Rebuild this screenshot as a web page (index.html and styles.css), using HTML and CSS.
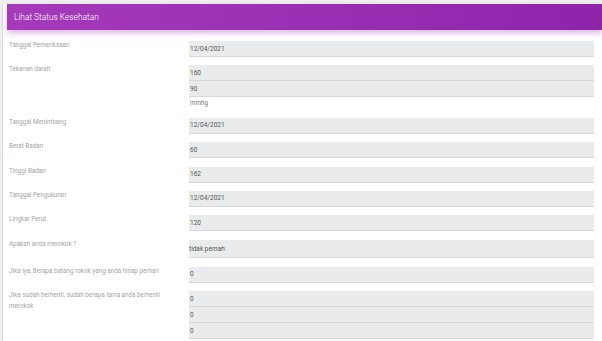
FILE: index.html
```html
<!DOCTYPE html>
<html lang="id">
<head>
  <meta charset="UTF-8">
  <meta name="viewport" content="width=device-width, initial-scale=1.0">
  <title>Lihat Status Kesehatan</title>
  <link rel="stylesheet" href="styles.css">
</head>
<body>
  <div class="card">
    <div class="card-header">
      <h4>Lihat Status Kesehatan</h4>
    </div>
    <form class="card-body">
      <div class="form-row">
        <label>Tanggal Pemeriksaan</label>
        <div class="field"><input type="text" value="12/04/2021" readonly></div>
      </div>
      <div class="form-row">
        <label>Tekanan darah</label>
        <div class="field">
          <input type="text" value="160" readonly>
          <input type="text" value="90" readonly>
          <span class="unit">mmhg</span>
        </div>
      </div>
      <div class="form-row">
        <label>Tanggal Menimbang</label>
        <div class="field"><input type="text" value="12/04/2021" readonly></div>
      </div>
      <div class="form-row">
        <label>Berat Badan</label>
        <div class="field"><input type="text" value="60" readonly></div>
      </div>
      <div class="form-row">
        <label>Tinggi Badan</label>
        <div class="field"><input type="text" value="162" readonly></div>
      </div>
      <div class="form-row">
        <label>Tanggal Pengukuran</label>
        <div class="field"><input type="text" value="12/04/2021" readonly></div>
      </div>
      <div class="form-row">
        <label>Lingkar Perut</label>
        <div class="field"><input type="text" value="120" readonly></div>
      </div>
      <div class="form-row">
        <label>Apakah anda merokok ?</label>
        <div class="field"><input type="text" class="select" value="tidak pernah" readonly></div>
      </div>
      <div class="form-row">
        <label>Jika iya, Berapa batang rokok yang anda hisap perhari</label>
        <div class="field"><input type="text" value="0" readonly></div>
      </div>
      <div class="form-row">
        <label>Jika sudah berhenti, sudah berapa lama anda berhenti merokok</label>
        <div class="field">
          <input type="text" value="0" readonly>
          <input type="text" value="0" readonly>
          <input type="text" value="0" readonly>
        </div>
      </div>
    </form>
  </div>
</body>
</html>
```

FILE: styles.css
```css
body {
  font-family: Roboto, "Liberation Sans", sans-serif;
  background-color: #eef0ee;
  margin: 0;
  padding: 4px 0 0 2px;
  height: 337px;
  overflow: hidden;
}

.card {
  background: white;
  border-left: 1px solid #dcdcdc;
  height: 100%;
}

.card-header {
  margin-left: 4px;
  height: 26px;
  display: flex;
  align-items: center;
  padding-left: 7px;
  background: linear-gradient(90deg, #a53bbb, #8e24aa);
  box-shadow: 0 3px 6px rgba(156, 39, 176, 0.35);
}

.card-header h4 {
  margin: 0;
  color: white;
  font-size: 8.4px;
  font-weight: 300;
}

.card-body {
  padding: 11px 8px 0 6px;
}

.form-row {
  display: grid;
  grid-template-columns: 180px 1fr;
  margin-bottom: 8.4px;
}

.form-row label {
  display: block;
  padding-right: 12px;
  margin-top: -1px;
  font-size: 6.3px;
  line-height: 10.6px;
  color: #a5a5a5;
}

.field {
  display: flex;
  flex-direction: column;
}

.field input {
  height: 16px;
  margin: 0;
  padding: 0 0 0 1px;
  border: none;
  border-bottom: 1px solid #d6d8da;
  background: #e9ebed;
  font-family: Roboto, "Liberation Sans", sans-serif;
  font-size: 6.5px;
  color: #555;
  outline: none;
  box-sizing: border-box;
}

.field input.select {
  height: 18.7px;
  padding-left: 0;
}

.unit {
  font-size: 6.3px;
  line-height: 12px;
  color: #777;
  padding-left: 1px;
}
```
